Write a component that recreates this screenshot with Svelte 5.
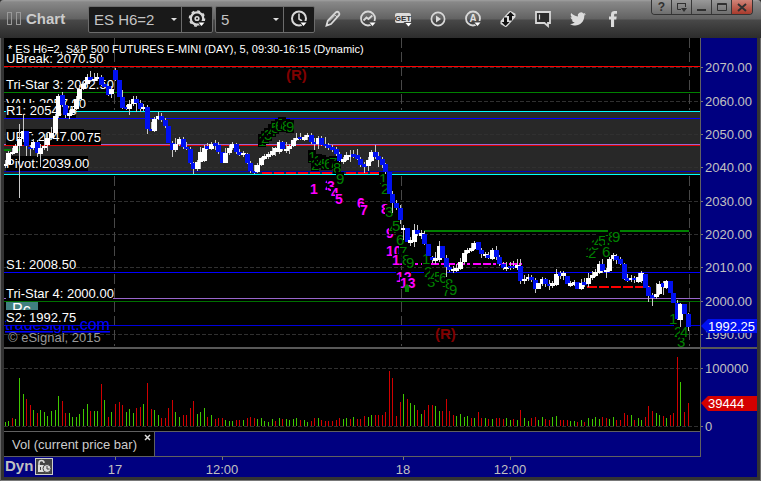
<script>
  const STEP = 3.556;
  const barX = (i) => Math.floor(5.3 + STEP * i);

  // body top, body bottom, high, low, direction (w = up, b = down)
  const candleRows = `164 166 160 168 w|153 164 151 165 w|152 154 148 155 w|146 153 144 153 w|139 146 124 198 w|131 139 114 142 w|131 146 131 156 b|147 149 145 156 b|142 148 139 150 w|142 153 140 157 b
148 154 144 167 w|146 148 134 150 w|138 145 134 151 w|133 138 127 140 w|116 133 114 134 w|96 116 94 118 w|95 105 92 107 b|105 115 103 118 b|113 116 110 119 w|109 113 106 114 w
99 109 96 110 w|89 99 85 101 w|84 89 81 90 w|77 84 74 85 w|77 80 71 82 b|79 81 73 83 w|77 79 73 81 w|77 85 75 86 b|84 87 82 89 b|86 95 84 96 b
89 94 86 98 w|70 80 68 81 b|80 97 80 97 b|97 108 90 109 b|107 109 105 110 b|104 109 100 115 w|99 104 96 106 w|99 103 96 112 b|103 109 100 112 b|107 109 104 111 w
107 129 105 134 b|129 131 122 131 b|119 131 117 132 w|116 119 112 120 w|116 120 113 122 b|120 126 118 128 b|126 143 126 143 b|143 150 141 157 b|144 150 138 152 w|139 144 137 146 w
139 147 137 149 b|147 149 142 150 b|149 163 147 164 b|163 169 162 174 b|162 169 160 171 w|152 162 147 169 w|148 161 145 162 w|146 149 143 150 b|144 149 142 150 w|143 146 140 150 b
145 152 142 154 b|152 163 152 163 b|153 163 148 163 w|148 153 145 155 w|144 148 142 150 w|144 152 143 154 b|152 155 149 156 b|153 155 151 157 w|154 163 153 164 b|163 171 161 173 b
171 173 165 174 b|165 172 163 173 w|158 165 157 166 w|156 159 154 160 w|154 157 152 159 w|151 155 147 156 w|148 152 147 156 w|142 152 140 154 w|142 149 141 151 b|149 151 142 153 w
146 149 144 154 w|140 146 138 147 w|138 140 133 141 w|137 139 133 140 b|137 140 135 141 w|135 137 133 140 w|135 142 133 144 b|142 144 138 150 b|138 144 136 149 w|138 145 136 146 b
144 146 137 148 b|145 148 143 150 b|147 150 145 152 b|149 154 147 156 b|154 161 152 162 b|159 162 157 164 w|155 160 152 161 w|155 157 150 162 w|154 157 150 158 b|155 159 149 160 b
159 165 157 167 b|164 167 162 173 b|160 166 157 171 w|152 161 150 162 w|152 157 145 159 b|156 160 152 167 b|159 165 157 168 b|164 172 163 174 b|172 194 172 194 b|194 203 191 213 b
203 208 200 210 b|208 220 205 224 b|228 230 225 240 w|228 242 228 242 b|240 243 237 246 w|230 242 224 247 w|230 234 225 236 b|233 236 230 239 w|234 244 231 245 b|244 256 244 256 b
257 260 256 263 b|258 261 252 264 w|246 260 241 262 w|246 258 246 258 b|258 267 255 277 b|267 270 265 272 b|269 271 266 273 w|268 271 264 272 w|262 269 258 270 w|253 262 250 264 w
250 253 248 254 w|248 251 243 252 w|243 249 241 250 w|242 250 242 250 b|250 254 248 258 b|254 256 252 258 w|255 258 252 259 b|250 259 248 260 w|250 257 246 260 b|257 264 255 266 b
264 268 262 270 b|267 269 262 271 w|266 268 262 270 b|266 268 261 269 b|265 268 259 270 w|266 281 259 284 b|279 281 275 284 w|277 279 274 281 w|277 280 275 282 b|280 289 278 293 b
283 289 283 289 w|279 284 277 286 w|279 284 278 287 b|284 286 280 290 b|283 286 281 288 w|274 285 269 286 w|273 276 271 279 b|273 276 271 280 w|276 284 276 284 b|283 286 281 287 w
282 285 280 286 w|282 289 282 289 b|283 289 279 290 w|282 285 278 287 b|278 284 273 287 w|275 278 271 280 w|272 276 269 277 w|264 273 261 274 w|264 271 259 273 b|270 272 268 278 w
259 271 257 272 w|255 259 253 261 w|256 260 254 264 b|259 264 257 265 b|264 279 263 280 b|278 281 274 282 b|278 280 275 282 w|278 280 276 283 b|277 282 273 283 w|273 281 271 283 w
274 288 274 288 b|287 296 286 302 b|295 298 293 306 b|294 297 283 299 w|284 294 281 295 w|283 287 281 295 b|281 288 280 289 w|281 293 281 293 b|293 303 293 303 b|303 319 300 320 b
304 320 303 327 w|304 314 304 314 b|314 327 313 331 b`;
  const candles = candleRows.split(/[|\n]/).map((row, i) => {
    const [top, bottom, high, low, dir] = row.trim().split(' ');
    return { x: barX(i), top: +top, h: bottom - top, high: +high, wick: low - high, up: dir === 'w' };
  });

  const volumeRows = `4g 5g 8r 7g 48g 32g 27r 21r 16g 13r 16g 14g 10g 15g 16g 30g 25r 13r 13g 9g 9g 12g 17g 22g 15r 15g 15g 42r 26g 9r 14g 22r 24r 21r 14g 17g 13g 18r 19r 22g
43r 17r 16g 11g 8r 8r 18r 26r 14g 9g 11r 11r 18r 25r 12g 14g 18g 9r 11g 7r 8r 8r 6g 5g 5g 6r 6r 6g 8r 9r 8r 7g
8g 5g 4g 7g 5r 8g 7r 7g 6g 7g 8g 6r 6g 4g 5r 8r 8g 6r 5r 5r 5r 6r 8r 7g 8g 7r 9g 7r 7r 10r 9g 11g 11r 11r 11r 14r 55r 48r 10r 24r 32g
27r 23g 21g 16r 12g 16r 21r 21r 20g 15g 15r 27r 15r 11r 10g 12g 9g 10g 8r 8g 14r 8r 8g 7r 7g 8r 8r 7r 8g
6g 7r 6g 16r 8g 5g 8r 9r 6g 9g 7r 6r 9g 10g 6r 6r 6r 5g 5g 4r 6g 4r 8g 7g 9g 7g 9r 8r 7g 9g 6r 6r 13r 11r 11g 6r 8g 6g 9r 20r 15r 13g 11g 10r 8g 11r 13r 69r 44g 14r 23r`;
  const volumes = volumeRows.split(/\s+/).map((v, i) => ({ x: barX(i), h: parseInt(v), up: v.endsWith('g') }));

  const gridYs = [67, 101, 134, 167, 201, 234, 267, 301, 334];
  const prices = gridYs.map((y, i) => ({ y, text: (2070 - i * 10).toFixed(2) }));
  const days = [114, 401, 689];

  const levels = [
    [66, '#f00'], [92, '#008000'], [111, '#0ff'], [118, '#00f'], [144, '#9966cc'], [145, '#d00'],
    [171, '#0000b8'], [174, '#0ff'], [272, '#00f'], [298, '#9966cc'], [301, '#007000'], [325, '#00d']
  ];

  const labels = [
    { t: 'UBreak: 2070.50', y: 63, w: 98 },
    { t: 'Tri-Star 3: 2062.50', y: 89, w: 107 },
    { t: 'VAH: 2057.00', y: 108, w: 81 },
    { t: 'R1: 2054.75', y: 115, w: 70 },
    { t: 'VPT: 2046.75', y: 142, w: 95, end: true },
    { t: 'UPT: 2047.00', y: 141, w: 78 },
    { t: 'Pivot: 2039.00', y: 168, w: 82 },
    { t: 'S1: 2008.50', y: 269, w: 70 },
    { t: 'Tri-Star 4: 2000.00', y: 298, w: 107 },
    { t: 'S2: 1992.75', y: 322, w: 70 }
  ];

  // digit, x, baseline
  const counts = [
    [1, 258, 146], [2, 261, 143], [3, 264, 140], [4, 268, 136], [5, 271, 133], [6, 275, 131], [7, 278, 129], [8, 282, 131], [9, 286, 132],
    [1, 308, 162], [2, 311, 170], [3, 314, 166], [4, 318, 167], [5, 321, 169], [6, 324, 169], [7, 329, 168], [8, 333, 173], [9, 336, 184],
    [1, 379, 184], [2, 381, 194], [3, 385, 217], [4, 389, 233], [5, 392, 231], [6, 396, 245], [7, 399, 257], [8, 402, 265], [9, 406, 268],
    [1, 422, 264], [2, 424, 277], [3, 427, 287], [4, 430, 281], [5, 434, 282], [6, 439, 283], [7, 442, 296], [8, 445, 289], [9, 449, 295],
    [1, 585, 257], [2, 588, 258], [3, 591, 250], [4, 594, 247], [5, 598, 246], [6, 602, 257], [7, 605, 245], [8, 608, 242], [9, 612, 242],
    [1, 669, 324], [2, 674, 337], [3, 677, 347], [4, 680, 337]
  ];
  const countdowns = [
    [1, 310, 194], [2, 325, 190], [3, 327, 191], [4, 331, 198], [5, 335, 204], [6, 357, 208], [7, 360, 215], [8, 381, 214],
    [9, 386, 238], [10, 386, 256], [11, 392, 265], [12, 396, 282], [13, 400, 288]
  ];

  const times = [
    { x: 115, t: '17' }, { x: 222, t: '12:00' }, { x: 403, t: '18' }, { x: 510, t: '12:00' }
  ];
</script>

<main class="window">
  <header class="toolbar">
    <svg class="grip" width="16" height="16" aria-hidden="true">
      <rect x="1.5" y="1.5" width="4" height="12" /><rect x="10.5" y="1.5" width="4" height="12" />
    </svg>
    <h1>Chart</h1>

    <div class="group symbol">
      <div class="pick">
        <select aria-label="Symbol"><option>ES H6=2</option></select>
        <i class="caret"></i>
      </div>
      <button aria-label="Symbol settings">
        <svg class="ic" width="20" height="20" viewBox="0 0 20 20">
          <circle cx="10" cy="9.500" r="6.200" stroke-width="2.200" />
          <circle cx="10" cy="9.500" r="7.500" stroke-width="1.600" stroke-dasharray="2.900 2.990" />
          <circle cx="10" cy="9.500" r="1.800" stroke-width="1.600" />
          <path d="M9.500 12h10l-5 6.500z" class="mask" /><path d="M11.500 13.500h6l-3 3.500z" class="arrow" />
        </svg>
      </button>
    </div>

    <div class="group interval">
      <div class="pick">
        <select aria-label="Interval"><option>5</option></select>
        <i class="caret"></i>
      </div>
      <button aria-label="Time template">
        <svg class="ic" width="20" height="20" viewBox="0 0 20 20">
          <circle cx="10" cy="9.500" r="7" stroke-width="2" /><path d="M10 4.500v5.500l3 2" stroke-width="1.600" />
          <path d="M9.500 12h10l-5 6.500z" class="mask" /><path d="M11.500 13.500h6l-3 3.500z" class="arrow" />
        </svg>
      </button>
    </div>

    <nav class="tools">
      <button aria-label="Draw">
        <svg class="ic" width="20" height="20" viewBox="0 0 20 20">
          <path d="M3.500 16.500l1.300-4.800L13 3.200q1.500-1 2.800.3 1.200 1.300.2 2.700l-8 8.800z" stroke-width="1.800" />
          <path d="M11.500 5.500l3 2.800M6 12.500l6-6.300" stroke-width="1" /><path d="M3 17l.8-3 2.200 2z" class="solid" />
        </svg>
      </button>
      <button aria-label="Studies">
        <svg class="ic" width="20" height="20" viewBox="0 0 20 20">
          <circle cx="10" cy="9.500" r="7" stroke-width="1.800" /><path d="M5.500 11.500l3-3 2 1.500 3.800-3.500" stroke-width="1.800" />
          <path d="M9.500 12h10l-5 6.500z" class="mask grey" /><path d="M11.500 13.500h6l-3 3.500z" class="arrow" />
        </svg>
      </button>
      <button aria-label="Advanced GET">
        <svg class="ic" width="20" height="20" viewBox="0 0 20 20">
          <rect x="2" y="4" width="16" height="10" rx="2" class="solid" />
          <text x="10" y="12" text-anchor="middle" class="get">GET</text>
          <path d="M10.500 13h9l-4 5.500z" class="mask grey" /><path d="M12.500 14h6l-3 3.500z" class="arrow" />
        </svg>
      </button>
      <button aria-label="Replay">
        <svg class="ic" width="20" height="20" viewBox="0 0 20 20">
          <circle cx="10" cy="10" r="6.600" stroke-width="1.700" /><path d="M8 6.500l5 3.500-5 3.500z" class="solid" />
        </svg>
      </button>
      <button aria-label="Alerts">
        <svg class="ic" width="20" height="20" viewBox="0 0 20 20">
          <circle cx="10" cy="9.500" r="7" stroke-width="1.800" />
          <text x="10" y="13" text-anchor="middle" class="letter">A</text>
          <path d="M9.500 12h10l-5 6.500z" class="mask grey" /><path d="M11.500 13.500h6l-3 3.500z" class="arrow" />
        </svg>
      </button>
      <button aria-label="Link trade">
        <svg class="ic" width="20" height="20" viewBox="0 0 20 20">
          <path d="M2.500 12l8.500-9.500q1-.8 2-.2l4.500 2.500v3.200L9 17.500q-1 .8-2 .2L2.500 15z" class="solid" />
          <path d="M12.500 3l4 4h-2.500v4.500h-3V7H8.500zM7.500 17l-4-4H6V8.500h3V13h2.500z" class="ink" />
        </svg>
      </button>
      <button aria-label="Notes">
        <svg class="ic" width="20" height="20" viewBox="0 0 20 20">
          <path d="M3 3h14v11h-2v3l-3.500-3H3z" stroke-width="1.800" class="note" /><path d="M6.500 5.500v5" stroke-width="1.200" />
        </svg>
      </button>
      <button aria-label="Twitter">
        <svg class="ic" width="18" height="18" viewBox="0 0 24 24">
          <path class="solid" d="M22.500 5.200c-.8.400-1.600.6-2.500.7.900-.5 1.600-1.400 1.900-2.400-.8.500-1.800.9-2.700 1.100a4.300 4.300 0 0 0-7.400 3.900C8.200 8.300 5 6.600 2.900 4c-1.100 2-.6 4.500 1.300 5.800-.7 0-1.400-.2-2-.5 0 2 1.500 3.900 3.500 4.300-.6.200-1.300.2-2 .1.600 1.700 2.200 2.900 4 3A8.700 8.700 0 0 1 1.400 18.500c8 5 19.200.6 19-11.100.8-.6 1.500-1.300 2.100-2.200z" />
        </svg>
      </button>
      <button aria-label="Facebook">
        <svg class="ic" width="20" height="20" viewBox="0 0 20 20">
          <path class="solid" d="M8 18v-7.500H6V7.500h2V5.500c0-2.600 1.500-3.500 3.500-3.500H14v2.800h-1.600c-1 0-1.300.4-1.300 1.200v1.500h2.600l-.4 3h-2.200V18z" />
        </svg>
      </button>
    </nav>

    <div class="controls">
      <button aria-label="Help">?</button>
      <button aria-label="Window menu"><svg class="thin" width="12" height="12"><path d="M5 8.500H1.500v-6h8V6" /><path d="M1 2.500h9" /><path d="M5 7h6l-3 4z" class="fill" /></svg></button>
      <button aria-label="Minimize"><svg width="12" height="12"><path d="M1 9h9" /></svg></button>
      <button aria-label="Maximize"><svg class="thin" width="12" height="12"><path d="M1.500 2.500h9v7h-9zM1 3.500h10" /></svg></button>
      <button aria-label="Close" class="close"><svg width="12" height="12"><path d="M2 3l8 7M10 3l-8 7" /></svg></button>
    </div>
  </header>

  <div class="body">
    <section class="plots">
      <svg class="price" aria-label="Price chart">
        <g transform="translate(-4 -38)">
          <g class="crisp">
            <rect x="4" y="111" width="110%" height="64" fill="#282828" />
            {#each gridYs as y}<line x1="4" x2="110%" y1={y + 0.5} y2={y + 0.5} class="grid" />{/each}
            {#each days as x}<line x1={x + 0.5} x2={x + 0.5} y1="38" y2="110" class="day" /><line x1={x + 0.5} x2={x + 0.5} y1="176" y2="346" class="day" />{/each}
            {#each levels as [y, color]}<rect x="4" {y} width="110%" height="1" fill={color} />{/each}
            <path d="M4 150h18" stroke="#008000" stroke-width="2" stroke-dasharray="7 2" />
            <path d="M262 173h126" stroke="#f00" stroke-width="2" stroke-dasharray="10 2" />
            <path d="M424 231h265" stroke="#008000" stroke-width="2" />
            <path d="M415 264h107" stroke="#f0f" stroke-width="2" stroke-dasharray="3 3 8 2 8 2" />
            <path d="M587 287h63" stroke="#f00" stroke-width="2" stroke-dasharray="10 2" />
          </g>

          <text x="5" y="330" class="site">tradesight.com</text>
          <rect x="6" y="302" width="32" height="12" fill="#408080" />
          <text x="12" y="315" class="badge">Pc</text>
          {#each labels as l}
            <rect x="6" y={l.y - 12} width={l.w} height="15" />
            <text x={l.end ? 6 + l.w : 6} y={l.y} text-anchor={l.end ? 'end' : 'start'} class="label">{l.t}</text>
          {/each}
          <text x="8" y="53" class="title">* ES H6=2, S&amp;P 500 FUTURES E-MINI (DAY), 5, 09:30-16:15 (Dynamic)</text>
          <text x="8" y="342" class="copy">© eSignal, 2015</text>
          <text x="286" y="80" class="roll">(R)</text>
          <text x="435" y="339" class="roll">(R)</text>

          {#each countdowns as [n, x, y]}
            <rect {x} y={y - 11} width={n > 9 ? 15 : 8} height="12" />
            <text {x} {y} class="countdown">{n}</text>
          {/each}
          {#each counts as [n, x, y]}
            <rect {x} y={y - 12} width="8" height="13" />
            <text {x} {y} class="count">{n}</text>
          {/each}
          <path d="M407 284l4 4h-2v4h-4v-4h-2z" fill="#008000" />

          <g class="crisp">
            {#each candles as c}<rect x={c.x} y={c.high} width="1" height={c.wick} fill="#c8c8c8" />{/each}
            {#each candles as c}<rect x={c.x - 2} y={c.top} width="5" height={c.h} fill={c.up ? '#fff' : '#0010f0'} />{/each}
          </g>
        </g>
      </svg>
      <svg class="volume" aria-label="Volume chart">
        <g transform="translate(-4 -349)" class="crisp">
          <line x1="4" x2="110%" y1="368.500" y2="368.500" class="grid" />
          <line x1="4" x2="110%" y1="426.500" y2="426.500" class="grid" />
          {#each volumes as v}<rect x={v.x} y={426 - v.h} width="1" height={v.h} fill={v.up ? '#40c800' : '#d00000'} />{/each}
        </g>
      </svg>
      <div class="tabs">
        <div class="tab"><span>Vol (current price bar)</span><button aria-label="Close study"><svg width="7" height="7"><path d="M1 1l5 5M6 1L1 6" /></svg></button></div>
      </div>
    </section>

    <aside class="scale">
      <svg class="price-scale" aria-label="Price scale">
        <g transform="translate(-701 -38)">
          {#each prices as p}
            <rect x="701" y={p.y} width="2" height="1" fill="#777" />
            <text x="705" y={p.y + 5} class="tick">{p.text}</text>
          {/each}
          <path d="M701 326l7-7h50v14h-50z" fill="#0010f0" />
          <text x="708" y="331" class="flag">1992.25</text>
        </g>
      </svg>
      <svg class="volume-scale" aria-label="Volume scale">
        <g transform="translate(-701 -349)">
          <rect x="701" y="368" width="2" height="1" fill="#777" /><rect x="701" y="426" width="2" height="1" fill="#777" />
          <text x="705" y="373" class="tick">100000</text>
          <text x="705" y="431" class="tick">0</text>
          <path d="M701 403l7-7h50v15h-50z" fill="#d40000" />
          <text x="708" y="408" class="flag">39444</text>
        </g>
      </svg>
    </aside>
  </div>

  <footer class="timebar">
    <strong>Dyn</strong>
    <button aria-label="Lock time range">
      <svg width="16" height="15" viewBox="0 0 16 15">
        <path d="M3 7V4a2.500 2.500 0 0 1 5 0" fill="none" stroke="#ddd" stroke-width="1.500" />
        <rect x="2" y="6" width="7" height="7" fill="#ddd" /><path d="M4.500 8v3" stroke="#444" />
        <circle cx="11" cy="9.500" r="4" fill="#ddd" stroke="#444" /><path d="M11 7v3h2.500" fill="none" stroke="#444" />
      </svg>
    </button>
    <svg class="times" aria-label="Time scale">
      <g transform="translate(-54 -457)">
        {#each times as t}
          <rect x={t.x} y="457" width="1" height="3" fill="#777" />
          <text x={t.x} y="474" text-anchor="middle" class="tick">{t.t}</text>
        {/each}
      </g>
    </svg>
  </footer>
</main>

<style>
  :global(body) { margin: 0; background: #303030; }
  .window {
    font-family: "Liberation Sans", Arial, sans-serif;
    font-size: 13px;
    background: #333;
    border-radius: 4px 4px 0 0;
    box-shadow: inset 1px 0 #686868, inset -1px 0 #686868, inset 0 -1px #787878;
    padding-bottom: 4px;
    overflow: hidden;
  }
  button { font: inherit; border: 0; padding: 0; margin: 0; background: none; color: inherit; display: flex; align-items: center; justify-content: center; }
  svg { display: block; }

  .toolbar {
    display: flex;
    align-items: center;
    height: 38px;
    box-sizing: border-box;
    padding: 0 8px 0 6px;
    background: linear-gradient(#a0a0a0 0, #888 2px, #626262 19px, #484848 20px, #2c2c2c 38px);
  }
  .grip rect { fill: none; stroke: #999; }
  h1 { margin: 0 0 0 4px; width: 62px; font-size: 15px; line-height: 20px; color: #ccc; }
  .group {
    display: flex;
    height: 27px;
    border: 1px solid #6c6c6c;
    border-radius: 2px;
    background: #191919;
    box-sizing: border-box;
  }
  .symbol { width: 125px; margin-right: 2px; }
  .interval { width: 100px; }
  .pick { flex: 1; display: flex; align-items: center; }
  .pick select {
    appearance: none;
    flex: 1;
    min-width: 0;
    border: 0;
    background: none;
    padding: 0 0 0 5px;
    color: #c4c4c4;
    font: 15px "Liberation Sans", Arial, sans-serif;
  }
  .caret { border: 3px solid transparent; border-top-color: #ddd; border-bottom: 0; margin-right: 4px; }
  .group button { width: 31px; border-left: 1px solid #6c6c6c; }
  .ic { fill: none; stroke: #d8d8d8; }
  .ic .solid { fill: #dcdcdc; stroke: none; }
  .ic .arrow { fill: #fff; stroke: none; }
  .ic .mask { fill: #191919; stroke: none; }
  .ic .grey { fill: #484848; }
  .ic .ink { fill: #111; stroke: none; }
  .ic .note { fill: #2c2c2c; }
  .ic text { stroke: none; font-weight: bold; }
  .get { fill: #333; font-size: 8px; }
  .letter { fill: #e0e0e0; font-size: 10px; }
  .tools { display: flex; flex: 1; }
  .tools button { width: 35px; height: 26px; }

  .controls {
    display: flex;
    align-self: flex-start;
    border: 1px solid #333;
    border-top: 0;
    border-radius: 0 0 4px 4px;
    overflow: hidden;
  }
  .controls button {
    width: 20px;
    height: 14px;
    box-sizing: border-box;
    border-right: 1px solid #383838;
    background: linear-gradient(#999, #6e6e6e);
    color: #303030;
    font-size: 12px;
    font-weight: bold;
  }
  .controls button:last-child { border-right: 0; }
  .controls .close { background: linear-gradient(#d08478, #a83a2c); }
  .controls svg { fill: none; stroke: #303030; stroke-width: 2; }
  .controls .thin { stroke-width: 1; }
  .controls .fill { fill: #303030; stroke: none; }

  .body { display: flex; margin: 0 4px; background: #000080; }
  .plots { flex: 1; min-width: 0; border-right: 1px solid #606060; }
  .price { width: 100%; height: 309px; background: #000; }
  .volume { width: 100%; height: 82px; background: #000; border-top: 2px solid #585858; }
  .crisp { shape-rendering: crispEdges; }
  .grid { stroke: #303030; stroke-dasharray: 4 2; }
  .day { stroke: #484848; stroke-dasharray: 10 4; }
  .label { fill: #fff; }
  .title { fill: #fff; font-size: 11px; }
  .site { fill: #00f; font-size: 16px; text-decoration: underline; }
  .badge { fill: #fff; font-size: 16px; }
  .copy { fill: #999; }
  .roll { fill: #800000; font-size: 15px; font-weight: bold; }
  .countdown { fill: #f0f; font-size: 14px; font-weight: bold; }
  .count { fill: #008000; font-size: 15px; }

  .tabs { display: flex; height: 26px; box-sizing: border-box; border-top: 1px solid #606060; border-bottom: 1px solid #606060; }
  .tab { display: flex; align-items: center; gap: 7px; padding: 0 3px 0 8px; background: #000; border-right: 1px solid #606060; color: #ccc; }
  .tab button { align-self: flex-start; padding-top: 2px; }
  .tab path { stroke: #ddd; stroke-width: 1.500; }

  .scale { width: 56px; }
  .price-scale { width: 100%; height: 309px; }
  .volume-scale { width: 100%; height: 82px; border-top: 2px solid #585858; }
  .tick { fill: #c0c0c0; }
  .flag { fill: #fff; }

  .timebar { display: flex; align-items: flex-start; height: 20px; margin: 0 4px; background: #000080; color: #c0c0c0; }
  .timebar strong { width: 31px; padding-left: 1px; font-size: 15px; line-height: 18px; box-sizing: border-box; }
  .timebar button { width: 18px; height: 17px; margin: 1px 1px 0 0; box-sizing: border-box; border: 1px solid #ccc; background: #444; }
  .times { flex: 1; height: 20px; }
</style>
